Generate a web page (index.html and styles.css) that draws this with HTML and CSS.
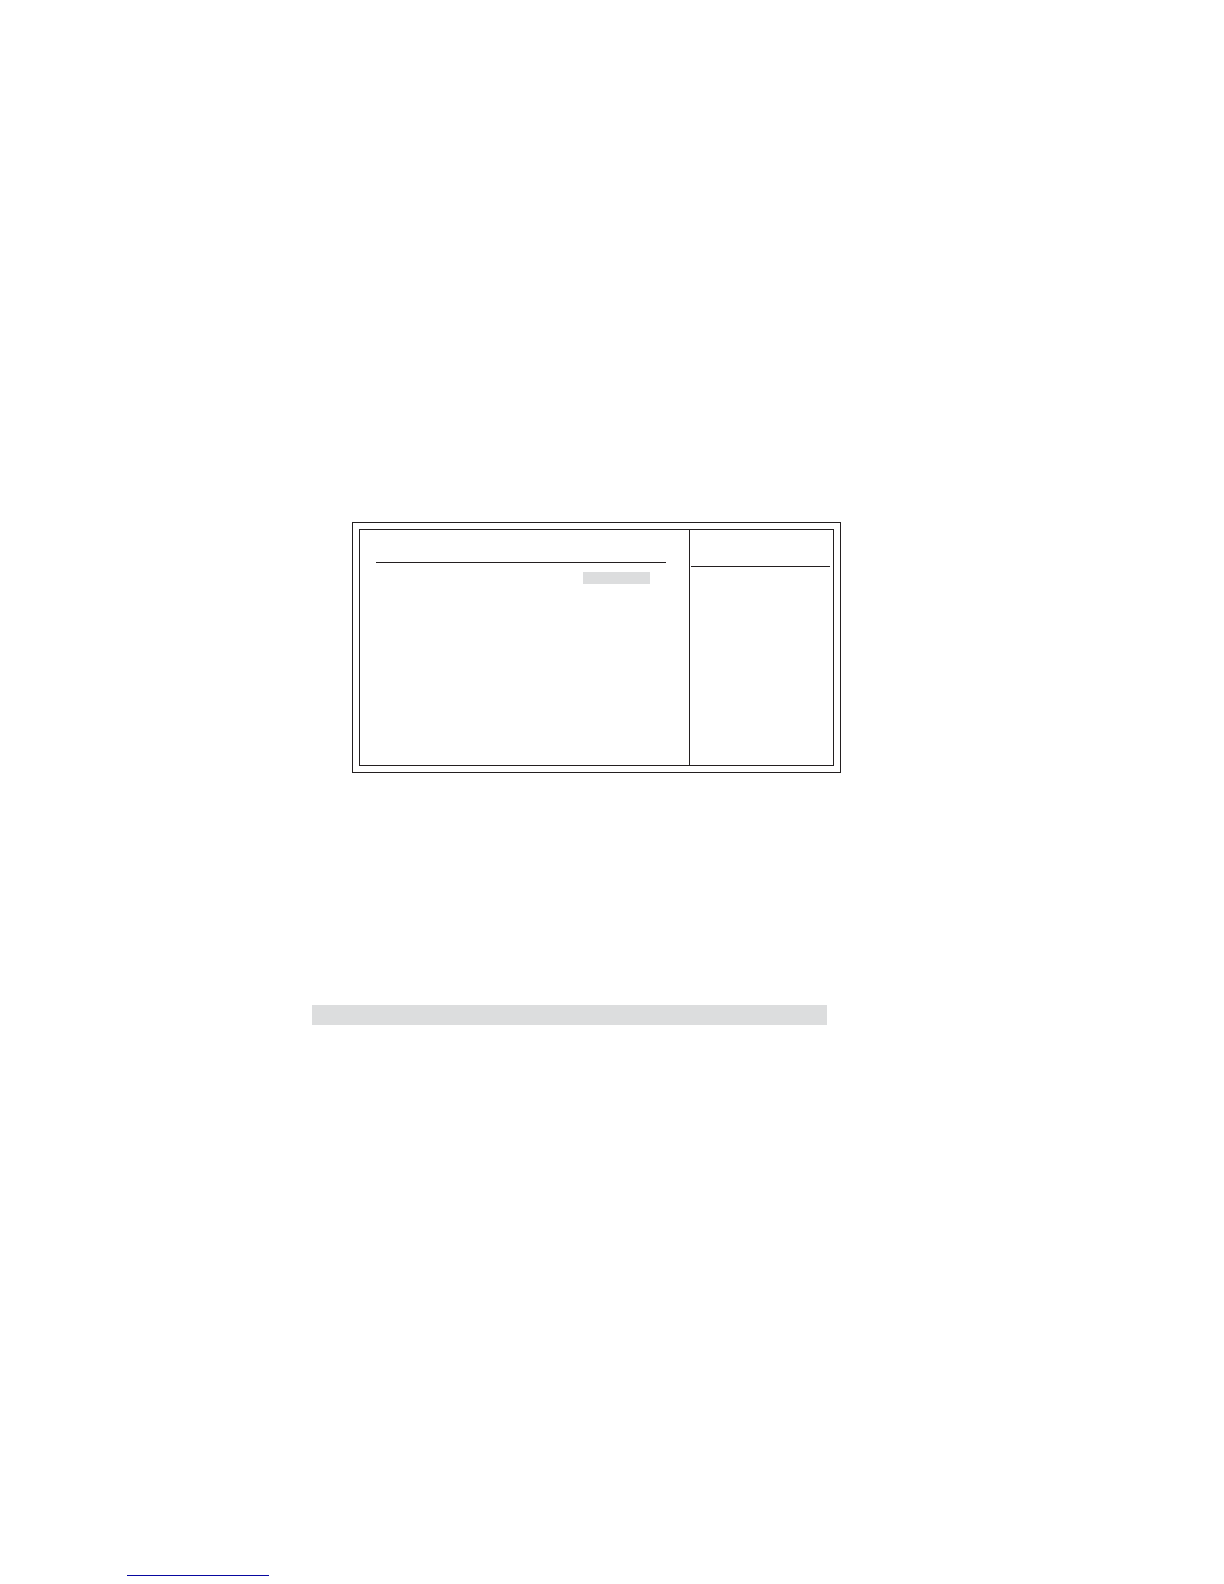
FILE: index.html
```
<!DOCTYPE html>
<html lang="en">
<head>
    <meta charset="UTF-8">
    <meta name="viewport" content="width=device-width, initial-scale=1">
    <title>Setup</title>

    <link rel="stylesheet" href="styles.css">
</head>

<body>

    <main class="page">
        <!-- double framed setup screen -->
        <section class="screen">
            <div class="screen-inner">
                <div class="options">
                    <hr class="rule">
                    <div class="selected"></div>
                </div>
                <aside class="help">
                    <hr class="rule">
                </aside>
            </div>
        </section>

        <div class="band"></div>
    </main>

    <footer class="footer">
        <a href="#" class="footer-link" aria-label="Home"></a>
    </footer>

</body>
</html>
```
FILE: styles.css
```
* {
    box-sizing: border-box;
}
body {
    margin: 0;
    background-color: #fff;
    font-family: "Liberation Sans", Arial, sans-serif;
}
.page {
    padding: 522px 383px 0 312px;
}
.screen {
    margin-left: 40px;
    padding: 6px;
    border: 1px solid #231f20;
}
.screen-inner {
    display: grid;
    grid-template-columns: 1fr 144px;
    min-height: 237px;
    border: 1px solid #231f20;
}
.options {
    padding: 32px 23px 0 16px;
}
.help {
    padding: 36px 3px 0 1px;
    border-left: 1px solid #231f20;
}
.rule {
    height: 1px;
    margin: 0;
    border: 0;
    background-color: #231f20;
}
.selected {
    width: 67px;
    height: 12px;
    margin: 9px 16px 0 auto;
    background-color: #dcddde;
}
.band {
    height: 20px;
    margin: 232px 14px 0 0;
    background-color: #dcddde;
}
.footer {
    padding: 550px 0 0 127px;
}
.footer-link {
    display: block;
    width: 142px;
    border-bottom: 1px solid #0808a0;
}
```
